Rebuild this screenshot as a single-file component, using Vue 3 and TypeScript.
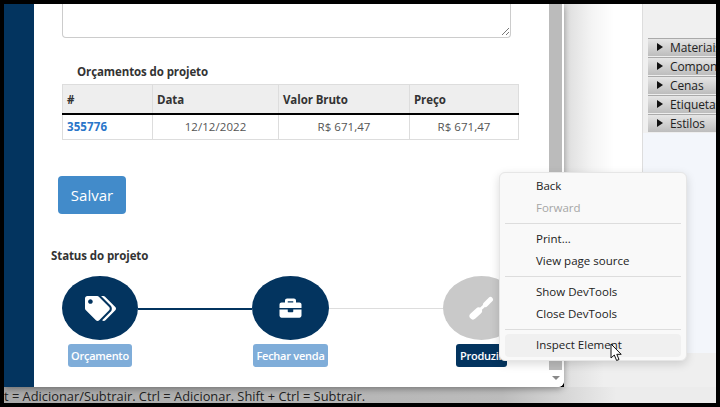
<script setup lang="ts">
const columns: string[] = ['#', 'Data', 'Valor Bruto', 'Preço']
const panels: string[] = ['Materiais', 'Componentes', 'Cenas', 'Etiquetas', 'Estilos']
const menuGroups = [
  [{ label: 'Back' }, { label: 'Forward', disabled: true }],
  [{ label: 'Print...' }, { label: 'View page source' }],
  [{ label: 'Show DevTools' }, { label: 'Close DevTools' }],
  [{ label: 'Inspect Element', hover: true }],
]
</script>

<template>
  <div class="frame">
    <div class="stage">
      <div class="workspace">
        <div class="window">
          <div class="sidebar"></div>
          <main class="page">
            <div class="textarea">
              <svg class="grip" width="8" height="9" viewBox="0 0 8 9">
                <path d="M0 8 7 1M4 8 7 5" stroke="#777" stroke-width="1" fill="none" />
              </svg>
            </div>
            <h3 class="budget-title">Orçamentos do projeto</h3>
            <table class="budget">
              <thead>
                <tr><th v-for="c in columns" :key="c">{{ c }}</th></tr>
              </thead>
              <tbody>
                <tr>
                  <td class="id">355776</td>
                  <td class="date">12/12/2022</td>
                  <td class="money">R$ 671,47</td>
                  <td class="money">R$ 671,47</td>
                </tr>
              </tbody>
            </table>
            <button class="save">Salvar</button>
            <h3 class="status-title">Status do projeto</h3>
            <div class="steps">
              <div class="circle">
                <svg width="31" height="25" viewBox="0 0 640 512" fill="#fff"><path d="M497.941 225.941L286.059 14.059A48 48 0 0 0 252.118 0H48C21.49 0 0 21.49 0 48v204.118a48 48 0 0 0 14.059 33.941l211.882 211.882c18.744 18.745 49.136 18.746 67.882 0l204.118-204.118c18.745-18.745 18.745-49.137 0-67.882zM112 160c-26.51 0-48-21.49-48-48s21.49-48 48-48 48 21.49 48 48-21.49 48-48 48zm513.941 133.823L421.823 497.941c-18.745 18.745-49.137 18.745-67.882 0l-.36-.36L527.64 323.522c16.999-16.999 26.36-39.6 26.36-63.64s-9.362-46.641-26.36-63.64L331.397 0h48.721a48 48 0 0 1 33.941 14.059l211.882 211.882c18.745 18.745 18.745 49.137 0 67.882z" /></svg>
              </div>
              <div class="link done"></div>
              <div class="circle">
                <svg width="25" height="22" viewBox="0 0 512 512" fill="#fff"><path d="M320 336c0 8.84-7.16 16-16 16h-96c-8.84 0-16-7.16-16-16v-48H0v144c0 25.6 22.4 48 48 48h416c25.6 0 48-22.4 48-48V288H320v48zm144-208h-80V80c0-25.6-22.4-48-48-48H176c-25.6 0-48 22.4-48 48v48H48c-25.6 0-48 22.4-48 48v80h512v-80c0-25.6-22.4-48-48-48zm-144 0H192V96h128v32z" /></svg>
              </div>
              <div class="link"></div>
              <div class="circle todo">
                <svg width="25" height="24" viewBox="0 0 25 24" fill="none" stroke="#fff" stroke-linecap="round">
                  <path d="M4 20 9.500 15" stroke-width="7" />
                  <path d="M9.500 15 16 9" stroke-width="3" />
                  <path d="M16.500 8.500 21.500 3.500" stroke-width="5" />
                </svg>
              </div>
              <span class="tag light">Orçamento</span>
              <span></span>
              <span class="tag light">Fechar venda</span>
              <span></span>
              <span class="tag dark">Produzir</span>
            </div>
          </main>
          <div class="scrollbar">
            <div class="thumb"></div>
            <div class="arrow"></div>
          </div>
        </div>
        <div class="desk">
          <div class="desk-top">
            <div class="gutter"></div>
            <aside class="panel">
              <div class="tray">
                <div v-for="p in panels" :key="p" class="tray-row">
                  <span class="tri"></span><span class="tray-label">{{ p }}</span>
                </div>
              </div>
              <div class="tray-rest"></div>
            </aside>
          </div>
          <div class="desk-bottom"></div>
        </div>
      </div>
      <footer class="statusbar">t = Adicionar/Subtrair. Ctrl = Adicionar. Shift + Ctrl = Subtrair.</footer>

      <nav class="menu">
        <template v-for="(group, i) in menuGroups" :key="i">
          <div v-if="i > 0" class="sep"></div>
          <div
            v-for="item in group"
            :key="item.label"
            class="item"
            :class="{ disabled: item.disabled, hover: item.hover }"
          >{{ item.label }}</div>
        </template>
      </nav>
      <svg class="cursor" width="13" height="19" viewBox="0 0 13 19">
        <path d="M1 1V15L4.300 12 6.600 17.500 9 16.500 6.800 11.300H11.200Z" fill="#fff" stroke="#111" stroke-width="1" stroke-linejoin="round" />
      </svg>
    </div>
  </div>
</template>

<style scoped>
.frame {
  width: 720px;
  height: 407px;
  padding: 4px;
  box-sizing: border-box;
  background: #000;
  overflow: hidden;
  font-family: "Open Sans", "Noto Sans", sans-serif;
}
.stage {
  position: relative;
  width: 712px;
  height: 399px;
  overflow: hidden;
  display: flex;
  flex-direction: column;
}
.workspace {
  display: flex;
  height: 383px;
  flex: none;
}
.window {
  position: relative;
  z-index: 1;
  display: flex;
  width: 560px;
  flex: none;
  background: #fff;
  border-bottom-right-radius: 6px;
  box-shadow: 0 2px 6px rgba(0, 0, 0, 0.35);
  overflow: hidden;
}
.sidebar {
  width: 30px;
  flex: none;
  background: #03345f;
}
.page {
  width: 515px;
  flex: none;
  box-sizing: border-box;
  padding-left: 24px;
  color: #333;
}
.textarea {
  position: relative;
  width: 449px;
  height: 34px;
  margin-left: 4px;
  box-sizing: border-box;
  border: 1px solid #ccc;
  border-top: 0;
  border-radius: 0 0 4px 4px;
}
.grip {
  position: absolute;
  right: 0;
  bottom: 1px;
}
.budget-title,
.status-title {
  margin: 0;
  font-size: 11.5px;
  line-height: 16px;
  font-weight: 700;
  color: #333;
  letter-spacing: -0.1px;
}
.budget-title {
  margin: 26px 0 4px 19px;
}
.budget {
  width: 457px;
  margin-left: 4px;
  border-collapse: collapse;
  table-layout: fixed;
  font-size: 11.5px;
}
.budget th:nth-child(1) { width: 90px; }
.budget th:nth-child(2) { width: 126px; }
.budget th:nth-child(3) { width: 131px; }
.budget th,
.budget td {
  border: 1px solid #ddd;
  padding: 0 4px;
  height: 26px;
  box-sizing: border-box;
}
.budget th {
  background: #eee;
  border-bottom: 2px solid #000;
  text-align: left;
  font-weight: 700;
  height: 29px;
  padding-top: 2px;
  letter-spacing: -0.1px;
}
.id {
  font-weight: 700;
  color: #2a76c9;
  letter-spacing: 0.1px;
}
.date,
.money {
  text-align: center;
  color: #555;
  letter-spacing: 0.05px;
}
.save {
  display: block;
  width: 68px;
  height: 38px;
  margin-top: 36px;
  border: 0;
  border-radius: 4px;
  background: #428bca;
  color: #fff;
  font: 400 15px "Open Sans", sans-serif;
}
.status-title {
  margin: 34px 0 12px -7px;
}
.steps {
  display: grid;
  grid-template-columns: 76px 114px 77px 114px 77px;
  grid-template-rows: 64px 23px;
  row-gap: 4px;
  margin-left: 4px;
  width: 458px;
}
.circle {
  display: flex;
  align-items: center;
  justify-content: center;
  border-radius: 50%;
  background: #03345f;
}
.circle.todo {
  background: #c9c9c9;
}
.link {
  align-self: center;
  height: 1px;
  background: #ddd;
}
.link.done {
  height: 2px;
  margin-top: 2px;
  background: #03345f;
}
.tag {
  justify-self: center;
  display: flex;
  align-items: center;
  padding: 0 3.500px;
  border-radius: 3px;
  font-size: 11px;
  font-weight: 600;
  letter-spacing: -0.25px;
  color: #fff;
  white-space: nowrap;
}
.tag.light {
  background: #7fadd9;
}
.tag.dark {
  background: #03345f;
}
.scrollbar {
  position: relative;
  flex: 1;
  background: #fff;
}
.thumb {
  width: 13px;
  height: 366px;
  background: #bbb;
}
.arrow {
  position: absolute;
  left: 3px;
  bottom: 7px;
  border-left: 4px solid transparent;
  border-right: 4px solid transparent;
  border-top: 4px solid #888;
}
.desk {
  flex: 1;
  display: flex;
  flex-direction: column;
}
.desk-top {
  flex: 1;
  display: flex;
}
.gutter {
  width: 78px;
  background: linear-gradient(90deg, #dcdcdc, #f4f4f4 28px, #fff 50px);
}
.panel {
  flex: 1;
  display: flex;
  flex-direction: column;
  border-left: 1px solid #ddd;
  background: #f0f0f0;
  padding-top: 34px;
}
.tray {
  margin-left: 5px;
  overflow: hidden;
}
.tray-row {
  display: flex;
  align-items: center;
  height: 19px;
  box-sizing: border-box;
  padding-bottom: 1px;
  border-top: 1px solid #aaa;
  border-bottom: 1px solid #eee;
  background: linear-gradient(#e6e6e6, #bdbdbd);
  font-size: 12px;
  letter-spacing: -0.1px;
  color: #222;
  white-space: nowrap;
}
.tri {
  width: 0;
  height: 0;
  margin: 0 7px 0 9px;
  border-top: 4px solid transparent;
  border-bottom: 4px solid transparent;
  border-left: 6px solid #111;
  flex: none;
}
.tray-rest {
  flex: 1;
  background: #f3f6fb;
}
.desk-bottom {
  height: 34px;
  background: linear-gradient(90deg, #dedede, #efefef 40px);
}
.statusbar {
  height: 16px;
  flex: none;
  overflow: hidden;
  background: linear-gradient(90deg, #a9a9a9, #bcbcbc 70%, #ececec 86%);
  font-size: 12.850px;
  line-height: 19px;
  color: #222;
  white-space: nowrap;
}
.menu {
  position: absolute;
  z-index: 2;
  left: 495px;
  top: 168px;
  width: 188px;
  box-sizing: border-box;
  padding: 2px 5px 3px;
  background: #f9f9f9;
  border: 1px solid #e6e6e6;
  border-radius: 6px;
  box-shadow: 0 3px 10px rgba(0, 0, 0, 0.15);
  font-size: 11.500px;
  color: #222;
}
.item {
  height: 22px;
  line-height: 21px;
  padding-left: 31px;
  border-radius: 4px;
  white-space: nowrap;
}
.item.disabled {
  color: #a6a6a6;
}
.item.hover {
  background: #f0f0f0;
  height: 23px;
  line-height: 22px;
}
.sep {
  height: 1px;
  margin: 4px 0 4px 0;
  background: #ddd;
}
.cursor {
  position: absolute;
  z-index: 3;
  left: 606px;
  top: 339px;
}
</style>
